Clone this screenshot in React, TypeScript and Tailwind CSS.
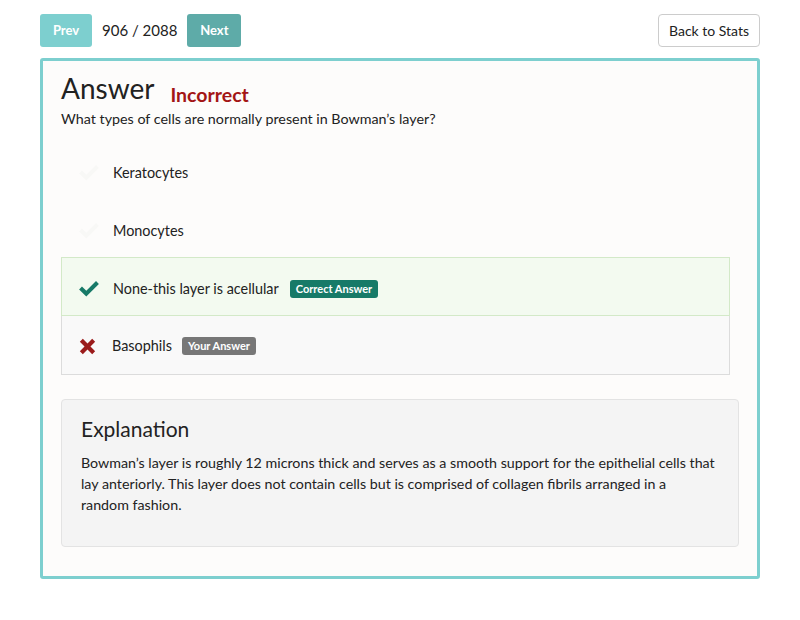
import React from "react";

const font = { fontFamily: "Lato, 'Open Sans', sans-serif" };

function Check({ className }: { className?: string }) {
  return (
    <svg viewBox="0 0 24 20" className={className} fill="currentColor">
      <path d="M1 10.5 L4.2 7.3 L9 12 L19.8 1.2 L23 4.4 L9 18.4 Z" />
    </svg>
  );
}

function Cross({ className }: { className?: string }) {
  return (
    <svg viewBox="0 0 20 20" className={className} fill="currentColor">
      <path d="M1 4.5 L4.5 1 L10 6.5 L15.5 1 L19 4.5 L13.5 10 L19 15.5 L15.5 19 L10 13.5 L4.5 19 L1 15.5 L6.5 10 Z" />
    </svg>
  );
}

type Choice = {
  text: string;
  state: "none" | "correct" | "wrong";
};

const choices: Choice[] = [
  { text: "Keratocytes", state: "none" },
  { text: "Monocytes", state: "none" },
  { text: "None-this layer is acellular", state: "correct" },
  { text: "Basophils", state: "wrong" },
];

function ChoiceRow({ choice }: { choice: Choice }) {
  if (choice.state === "correct") {
    return (
      <div className="flex h-[59px] items-center border border-[#d3e9c8] bg-[#f3faf0] pl-[16px] pt-[4px]">
        <Check className="h-[18px] w-[22px] text-[#177a68]" />
        <span className="ml-[13px] text-[14.4px] text-[#222]">{choice.text}</span>
        <span className="ml-[11px] rounded-[3px] bg-[#177a68] px-[6px] py-[2px] text-[11px] font-bold leading-[14px] text-white">
          Correct Answer
        </span>
      </div>
    );
  }
  if (choice.state === "wrong") {
    return (
      <div className="flex h-[59px] items-center border border-t-0 border-[#dcdcdc] bg-[#f9f9f9] pl-[17px] pt-[2px]">
        <Cross className="h-[17px] w-[17px] text-[#9b1b1b]" />
        <span className="ml-[16px] text-[14.4px] text-[#222]">{choice.text}</span>
        <span className="ml-[10px] rounded-[3px] bg-[#777] px-[6px] py-[2px] text-[11px] font-bold leading-[14px] text-white">
          Your Answer
        </span>
      </div>
    );
  }
  return (
    <div className="flex h-[58px] items-center pl-[17px] pt-[6px]">
      <Check className="h-[18px] w-[22px] text-[#f8f8f6]" />
      <span className="ml-[13px] text-[14.4px] text-[#222]">{choice.text}</span>
    </div>
  );
}

export default function App() {
  return (
    <div className="min-h-[620px] w-[800px] bg-white text-[#222]" style={font}>
      <div className="px-[40px] pt-[14px]">
        <div className="flex items-center justify-between">
          <div className="flex items-center">
            <button className="h-[33px] w-[52px] rounded-[3px] bg-[#7dcfcf] text-[13px] font-bold text-white">
              Prev
            </button>
            <span className="ml-[10px] text-[15px] text-[#222]">906 / 2088</span>
            <button className="ml-[10px] h-[33px] w-[54px] rounded-[3px] bg-[#5eaba8] text-[13px] font-bold text-white">
              Next
            </button>
          </div>
          <button className="h-[33px] w-[102px] rounded-[4px] border border-[#cccccc] bg-white text-[14px] text-[#222]">
            Back to Stats
          </button>
        </div>

        <div className="mt-[11px] rounded-[3px] border-[3px] border-[#7dcfcf] bg-[#fdfcfb] pb-[29px] pl-[18px] pr-[18px] pt-[8px]">
          <div className="flex items-end">
            <h1 className="text-[28px] leading-[38px] text-[#222]">Answer</h1>
            <span className="ml-[16px] text-[19.5px] font-bold leading-[24px] text-[#a31515]">Incorrect</span>
          </div>
          <p className="mt-[2px] text-[14.3px] leading-[20px] text-[#222]">
            What types of cells are normally present in Bowman&rsquo;s layer?
          </p>

          <div className="mt-[12px] w-[669px]">
            {choices.map((c) => (
              <ChoiceRow key={c.text} choice={c} />
            ))}
          </div>

          <div className="mt-[24px] w-[678px] rounded-[4px] border border-[#e3e3e3] bg-[#f4f4f4] px-[19px] pb-[31px] pt-[15px]">
            <h2 className="text-[21px] leading-[28px] text-[#222]">Explanation</h2>
            <p className="mt-[9px] text-[14.25px] leading-[21px] text-[#222]">
              Bowman&rsquo;s layer is roughly 12 microns thick and serves as a smooth support for the epithelial cells that
              lay anteriorly. This layer does not contain cells but is comprised of collagen fibrils arranged in a
              <br />
              random fashion.
            </p>
          </div>
        </div>
      </div>
    </div>
  );
}
